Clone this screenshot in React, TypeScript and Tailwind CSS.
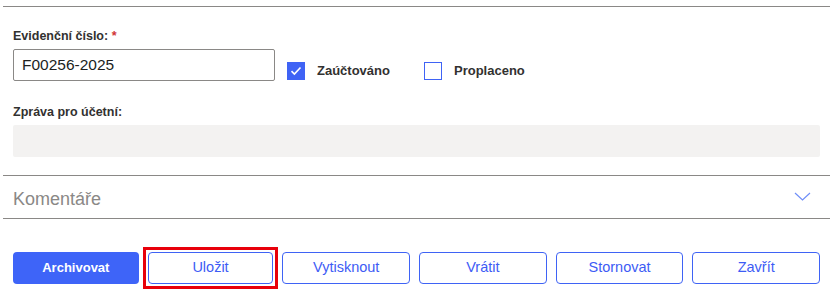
import React from "react";

function Check({ checked }: { checked: boolean }) {
  return checked ? (
    <div className="w-[18px] h-[18px] bg-[#3f63f5] flex items-center justify-center">
      <svg width="12" height="10" viewBox="0 0 12 10" fill="none">
        <path d="M1.5 5.2 L4.4 8 L10.5 1.5" stroke="white" strokeWidth="1.6" />
      </svg>
    </div>
  ) : (
    <div className="w-[18px] h-[18px] border-[1.5px] border-[#3f63f5] bg-white" />
  );
}

function Btn({ label, primary }: { label: string; primary?: boolean }) {
  return (
    <button
      className={
        primary
          ? "flex-1 h-[32px] rounded-[4px] bg-[#3e64f8] text-white font-bold text-[13px]"
          : "flex-1 h-[32px] rounded-[4px] border border-[#3f63f5] bg-white text-[#3d5cf5] text-[14.5px]"
      }
    >
      {label}
    </button>
  );
}

export default function App() {
  return (
    <div
      className="w-[833px] h-[296px] bg-white px-[3px] pt-[6px] text-[#323130]"
      style={{ fontFamily: '"Liberation Sans", Arial, sans-serif' }}
    >
      <div className="border-t border-[#8a8886]" />
      <div className="px-[10px]">
        <div className="mt-[21px] text-[12.5px] leading-[16px] font-bold">
          Evidenční číslo: <span className="text-[#d13438]">*</span>
        </div>
        <div className="mt-[5px] flex items-start">
          <div className="w-[262px] h-[32px] border border-[#8a8886] rounded-[2px] flex items-center pl-[8px] text-[15.5px] text-[#201f1e]">
            F00256-2025
          </div>
          <div className="ml-[12px] mt-[12px] flex items-center">
            <Check checked />
            <span className="ml-[12px] text-[13px] font-bold">Zaúčtováno</span>
            <div className="ml-[34px]">
              <Check checked={false} />
            </div>
            <span className="ml-[12px] text-[13px] font-bold">Proplaceno</span>
          </div>
        </div>
        <div className="mt-[23px] text-[12.5px] leading-[16px] font-bold">Zpráva pro účetní:</div>
        <div className="mt-[5px] h-[32px] bg-[#f3f2f1] rounded-[2px]" />
      </div>
      <div className="mt-[18px] border-t border-[#8a8886]" />
      <div className="h-[42px] px-[10px] flex items-center justify-between">
        <span className="mt-[4px] text-[18px] leading-[24px] text-[#8a8886]">Komentáře</span>
        <svg width="17" height="10" viewBox="0 0 17 10" className="mr-[9px]" fill="none">
          <path d="M1 1 L8.5 8 L16 1" stroke="#6f8ef8" strokeWidth="1.2" />
        </svg>
      </div>
      <div className="border-t border-[#8a8886]" />
      <div className="px-[10px] mt-[33px] flex gap-[9px]">
        <Btn label="Archivovat" primary />
        <div className="flex-1 flex outline-[3px] outline-solid outline-[#e8000b] outline-offset-[2px]">
          <Btn label="Uložit" />
        </div>
        <Btn label="Vytisknout" />
        <Btn label="Vrátit" />
        <Btn label="Stornovat" />
        <Btn label="Zavřít" />
      </div>
    </div>
  );
}
